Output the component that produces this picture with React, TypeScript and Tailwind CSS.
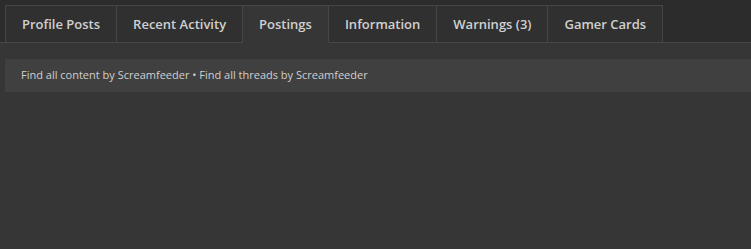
const tabs = [
  { label: 'Profile Posts' },
  { label: 'Recent Activity' },
  { label: 'Postings', active: true },
  { label: 'Information' },
  { label: 'Warnings (3)' },
  { label: 'Gamer Cards' },
];

export default function App() {
  return (
    <div className="min-h-[249px] bg-[#363636] font-['Open_Sans',sans-serif]">
      <div className="bg-[#2c2c2c] pl-[5px] pt-[5px] border-b border-[#464646]">
        <ul className="flex">
          {tabs.map((t, i) => (
            <li
              key={t.label}
              className={
                'h-[38px] -mb-px flex items-center pt-[2px] px-4 border-t border-r text-[13px] font-semibold text-[#d0d0d0] ' +
                (i === 0 ? 'border-l ' : '') +
                (t.active
                  ? 'bg-[#363636] border-[#464646] border-b border-b-[#363636]'
                  : 'bg-[#303030] border-[#464646] border-b')
              }
            >
              {t.label}
            </li>
          ))}
        </ul>
      </div>
      <div className="pt-4 pl-[5px]">
        <div className="h-[33px] bg-[#404040] flex items-center pl-4 text-[11px] text-[#cfcfcf]">
          Find all content by Screamfeeder • Find all threads by Screamfeeder
        </div>
      </div>
    </div>
  );
}
